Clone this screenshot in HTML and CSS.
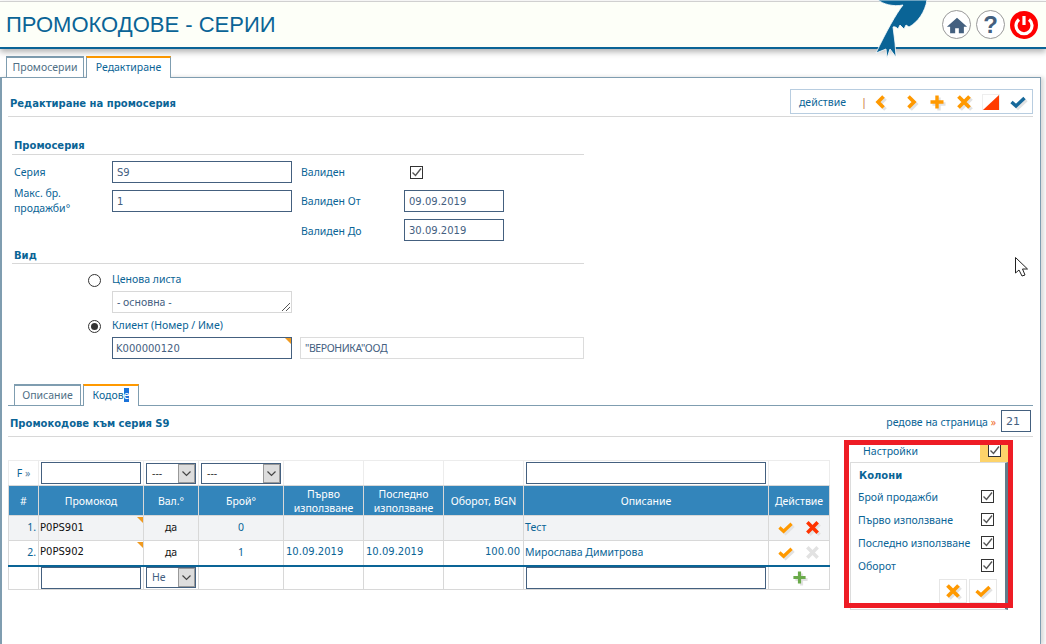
FILE: index.html
```html
<!DOCTYPE html>
<html lang="bg">
<head>
<meta charset="utf-8">
<title>Промокодове - серии</title>
<link rel="stylesheet" href="styles.css">
</head>
<body>
<svg class="defs" width="0" height="0" aria-hidden="true">
  <symbol id="i-check" viewBox="0 0 16 16"><path d="M1.5 8 L6 12 L14.5 4" fill="none" stroke="currentColor" stroke-width="3.4"/></symbol>
  <symbol id="i-cross" viewBox="0 0 16 16"><path d="M2.5 2.5 L13.5 13.5 M13.5 2.5 L2.5 13.5" fill="none" stroke="currentColor" stroke-width="3.8"/></symbol>
  <symbol id="i-plus" viewBox="0 0 16 16"><path d="M8 1.5 V14.5 M1.5 8 H14.5" fill="none" stroke="currentColor" stroke-width="3.4"/></symbol>
  <symbol id="i-left" viewBox="0 0 16 16"><path d="M10.5 2.5 L5 8 L10.5 13.5" fill="none" stroke="currentColor" stroke-width="3.6"/></symbol>
  <symbol id="i-right" viewBox="0 0 16 16"><path d="M5.5 2.5 L11 8 L5.5 13.5" fill="none" stroke="currentColor" stroke-width="3.6"/></symbol>
  <symbol id="i-tick" viewBox="0 0 11 11"><path d="M1.5 5.500 L4.500 8.500 L10 1.500" fill="none" stroke="#555" stroke-width="1.4"/></symbol>
  <symbol id="i-arrow" viewBox="0 0 15 17"><path d="M3.500 6.500 L7.500 10.500 L11.500 6.500" fill="none" stroke="#444" stroke-width="1.2"/></symbol>
</svg>

<header class="topbar">
  <h1 class="title">ПРОМОКОДОВЕ - СЕРИИ</h1>
  <svg class="bird" viewBox="0 0 70 60" width="70" height="60" aria-hidden="true">
    <path d="M18 0 C23 4 33 7 43 5 C36 14 26 32 16 53 L26 49 L27 58 L30 49 L36 57 L35 43 L33 27 C35 26 37 28 38 29 L40 25 L44 29 L46 25 L49 27 C58 22 65 12 67 0 Z" fill="#0a6496" stroke="#fff" stroke-width=".8"/>
  </svg>
  <nav class="top-icons">
    <span class="round">
      <svg viewBox="0 0 24 24" width="22" height="22" aria-hidden="true"><path d="M12 4 L23 14 H19.5 V21 H14 V15.500 H10 V21 H4.500 V14 H1 Z" fill="#44607f"/></svg>
    </span>
    <span class="round help">?</span>
    <span class="round power">
      <svg viewBox="0 0 28 28" width="28" height="28" aria-hidden="true"><path d="M9 8.500 A8 8 0 1 0 19 8.500" fill="none" stroke="#fff" stroke-width="3.2"/><path d="M14 5 V14" stroke="#fff" stroke-width="3.2"/></svg>
    </span>
  </nav>
</header>

<div class="tabs main-tabs">
  <span class="tab">Промосерии</span>
  <span class="tab active">Редактиране</span>
</div>

<main class="panel">
  <div class="panel-head">
    <h2 class="heading">Редактиране на промосерия</h2>
    <div class="toolbar">
      <span class="tool-label">действие</span>
      <span class="tool-sep">|</span>
      <svg class="ico orange t-left"><use href="#i-left"/></svg>
      <svg class="ico orange t-right"><use href="#i-right"/></svg>
      <svg class="ico orange t-plus"><use href="#i-plus"/></svg>
      <svg class="ico orange t-cross"><use href="#i-cross"/></svg>
      <svg class="ico t-tri" viewBox="0 0 18 16" aria-hidden="true"><rect x=".5" y=".5" width="17" height="15" fill="#fff" stroke="#eee"/><path d="M17 1 V16 H1 Z" fill="#ff3c00"/></svg>
      <svg class="ico blue t-check"><use href="#i-check"/></svg>
    </div>
  </div>

  <section class="form-section">
    <h3 class="section-title first">Промосерия</h3>
    <div class="form-grid">
      <label class="lbl">Серия</label>
      <input class="field" value="S9" readonly>
      <label class="lbl">Валиден</label>
      <span class="check-cell"><span class="check"><svg><use href="#i-tick"/></svg></span></span>

      <label class="lbl two-line">Макс. бр. продажби°</label>
      <input class="field" value="1" readonly>
      <label class="lbl">Валиден От</label>
      <input class="field" value="09.09.2019" readonly>

      <span></span>
      <span></span>
      <label class="lbl valid-to">Валиден До</label>
      <input class="field" value="30.09.2019" readonly>
    </div>

    <h3 class="section-title second">Вид</h3>
    <div class="kind">
      <div class="radio-row"><span class="radio"></span><span class="lbl">Ценова листа</span></div>
      <div class="resize-box">- основна -
        <svg class="grip" viewBox="0 0 8 8" width="8" height="8" aria-hidden="true"><path d="M0 8 L8 0 M4 8 L8 4" stroke="#555" stroke-width="1"/></svg>
      </div>
      <div class="radio-row second-radio"><span class="radio on"></span><span class="lbl">Клиент (Номер / Име)</span></div>
      <div class="client-row">
        <div class="marked"><input class="field client" value="K000000120" readonly></div>
        <input class="field ghost" value="&quot;ВЕРОНИКА&quot;ООД" readonly>
      </div>
    </div>
  </section>

  <div class="tabs sub-tabs">
    <span class="tab">Описание</span>
    <span class="tab active">Кодов<span class="selected">е</span></span>
  </div>

  <div class="list-head">
    <h2 class="heading list-title">Промокодове към серия S9</h2>
    <div class="per-page">
      <span class="per-text">редове на страница <b class="raquo">»</b></span>
      <input class="field perpage" value="21" readonly>
    </div>
  </div>

  <div class="list-body">
    <table class="grid">
      <colgroup>
        <col class="c-num"><col class="c-code"><col class="c-val"><col class="c-count"><col class="c-date"><col class="c-date"><col class="c-date"><col class="c-desc"><col class="c-act">
      </colgroup>
      <tr class="filter">
        <td class="f-mark">F <span>»</span></td>
        <td><input class="field cell-input" readonly></td>
        <td><span class="pick"><span class="pick-text dash">---</span><span class="pick-btn"><svg><use href="#i-arrow"/></svg></span></span></td>
        <td><span class="pick wide"><span class="pick-text dash">---</span><span class="pick-btn"><svg><use href="#i-arrow"/></svg></span></span></td>
        <td></td><td></td><td></td>
        <td><input class="field cell-input" readonly></td>
        <td></td>
      </tr>
      <tr class="head">
        <th>#</th><th>Промокод</th><th>Вал.°</th><th>Брой°</th><th>Първо<br>използване</th><th>Последно<br>използване</th><th>Оборот, BGN</th><th>Описание</th><th>Действие</th>
      </tr>
      <tr class="row odd">
        <td class="num">1.</td><td class="code">P0PS901</td><td class="yes">да</td><td class="ctr">0</td><td></td><td></td><td></td><td class="txt">Тест</td>
        <td class="acts"><svg class="ico small orange"><use href="#i-check"/></svg><svg class="ico small red"><use href="#i-cross"/></svg></td>
      </tr>
      <tr class="row last">
        <td class="num">2.</td><td class="code">P0PS902</td><td class="yes">да</td><td class="ctr">1</td><td class="date">10.09.2019</td><td class="date">10.09.2019</td><td class="sum">100.00</td><td class="txt">Мирослава Димитрова</td>
        <td class="acts"><svg class="ico small orange"><use href="#i-check"/></svg><svg class="ico small off"><use href="#i-cross"/></svg></td>
      </tr>
      <tr class="add">
        <td></td>
        <td><input class="field cell-input" readonly></td>
        <td><span class="pick"><span class="pick-text">Не</span><span class="pick-btn"><svg><use href="#i-arrow"/></svg></span></span></td>
        <td></td><td></td><td></td><td></td>
        <td><input class="field cell-input" readonly></td>
        <td class="acts"><svg class="ico small green"><use href="#i-plus"/></svg></td>
      </tr>
    </table>

    <aside class="settings">
      <div class="settings-head">
        <span class="settings-name">Настройки</span>
        <span class="settings-toggle"><span class="check"><svg><use href="#i-tick"/></svg></span></span>
      </div>
      <div class="settings-box">
        <div class="settings-title">Колони</div>
        <div class="opt"><span>Брой продажби</span><span class="check"><svg><use href="#i-tick"/></svg></span></div>
        <div class="opt"><span>Първо използване</span><span class="check"><svg><use href="#i-tick"/></svg></span></div>
        <div class="opt"><span>Последно използване</span><span class="check"><svg><use href="#i-tick"/></svg></span></div>
        <div class="opt"><span>Оборот</span><span class="check"><svg><use href="#i-tick"/></svg></span></div>
        <div class="settings-actions">
          <span class="btn"><svg class="ico orange"><use href="#i-cross"/></svg></span>
          <span class="btn"><svg class="ico orange"><use href="#i-check"/></svg></span>
        </div>
      </div>
      <div class="red-frame"></div>
    </aside>
  </div>
</main>

<svg class="cursor" viewBox="0 0 14 20" width="14" height="20" aria-hidden="true">
  <path d="M.5 .5 V16 L4 13 L7 19 L10 18 L7.500 12 H12.500 Z" fill="#fff" stroke="#222" stroke-width="1"/>
</svg>
</body>
</html>
```
FILE: styles.css
```css
* { box-sizing: border-box; }
html, body { margin: 0; height: 100%; }
body {
  background: #fff;
  color: #0a6496;
  font: 10.5px "Noto Sans", "Liberation Sans", sans-serif;
  overflow: hidden;
  position: relative;
}
.defs { position: absolute; }

.topbar {
  height: 48px;
  margin-top: 1px;
  border-top: 1px solid #d0d0d0;
  border-bottom: 2px solid #0a6496;
  background: #fdfff8;
  box-shadow: 0 3px 6px rgba(0, 0, 0, .3);
  display: flex;
  align-items: center;
  justify-content: space-between;
  padding: 0 8px 0 6px;
  position: relative;
  z-index: 2;
}
.title {
  margin: 0;
  font: 400 22px "Liberation Sans", sans-serif;
  color: #0a6496;
}
.bird { position: absolute; left: 860px; top: -2px; overflow: visible; }
.top-icons { display: flex; gap: 5px; align-items: center; }
.round {
  width: 29px;
  height: 29px;
  border-radius: 50%;
  border: 1px solid #999;
  background: #fff;
  display: flex;
  align-items: center;
  justify-content: center;
}
.help { font: 700 24px "Liberation Sans", sans-serif; color: #44607f; }
.power { background: #f00; border: 0; width: 28px; height: 28px; }

.tabs { display: flex; align-items: flex-end; gap: 2px; }
.main-tabs { height: 22px; margin-top: 6px; padding-left: 6px; position: relative; z-index: 1; }
.tab {
  height: 21px;
  line-height: 18px;
  padding: 0 7px;
  color: #4f6f85;
  background: #fff;
  border: 1px solid #7f9db0;
  border-top-width: 2px;
  border-bottom: 0;
}
.tab.active {
  border-top: 2px solid #f90;
  color: #0a6496;
  height: 22px;
  margin-bottom: -1px;
}
.main-tabs .tab { width: 78px; text-align: center; padding: 0; }
.main-tabs .tab.active { width: 85px; }

.panel {
  width: 1041px;
  height: 568px;
  margin-top: 0;
  border: 1px solid #7f9db0;
  border-left-width: 2px;
  box-shadow: 3px 0 4px rgba(0, 0, 0, .15);
  padding: 12px 7px 0 6px;
  background: #fff;
}
.panel-head {
  height: 27px;
  border-bottom: 1px solid #d8d8d8;
  display: flex;
  align-items: center;
  justify-content: space-between;
  padding-left: 2px;
}
.heading {
  margin: 0;
  font: 700 10px "DejaVu Sans", sans-serif;
  color: #0a6496;
}
.toolbar {
  height: 25px;
  width: 243px;
  margin-top: -3px;
  border: 1px solid #b8cde0;
  display: flex;
  align-items: center;
  padding-left: 8px;
}
.tool-label { width: 62px; }
.tool-sep { color: #c9703a; width: 10px; font-size: 11px; }
.ico { width: 16px; height: 16px; filter: drop-shadow(2px 2px 0 #e2e2e2); display: block; flex: none; }
.orange { color: #f90; }
.blue { color: #16689a; }
.red { color: #f30; }
.off { color: #e2e2e2; filter: none; }
.green { color: #6aaa4a; }
.t-left { margin-left: 2px; }
.t-right { margin-left: 14px; }
.t-plus { margin-left: 10px; }
.t-cross { margin-left: 11px; }
.t-tri { width: 18px; margin-left: 10px; filter: none; }
.t-check { margin-left: 10px; }

.form-section { width: 572px; margin-left: 4px; }
.section-title {
  margin: 0;
  height: 17px;
  font: 700 10px/16px "DejaVu Sans", sans-serif;
  padding-left: 2px;
  border-bottom: 1px solid #d8d8d8;
}
.section-title.first { margin-top: 21px; }
.section-title.second { margin-top: 6px; padding-top: 1px; line-height: 15px; }
.form-grid {
  display: grid;
  grid-template-columns: 100px 180px 112px 100px;
  grid-auto-rows: 22px;
  row-gap: 7px;
  margin-top: 6px;
}
.form-grid .lbl { align-self: center; padding-left: 2px; }
.form-grid .lbl:nth-child(3), .form-grid .lbl:nth-child(7), .form-grid .lbl:nth-child(11) { padding-left: 9px; }
.form-grid .valid-to { padding-top: 2px; }
.two-line { line-height: 15px; width: 92px; }
.lbl { color: #0a6496; }
.field {
  display: block;
  width: 100%;
  height: 22px;
  padding: 0 4px;
  border: 1px solid #44607f;
  border-radius: 0;
  outline: 0;
  background: #fff;
  color: #44607f;
  font: 10px "DejaVu Sans", sans-serif;
}
.check-cell { display: flex; align-items: center; padding-left: 6px; }
.check {
  width: 13px;
  height: 13px;
  border: 1px solid #333;
  background: #fff;
  display: block;
  flex: none;
}
.check svg { display: block; width: 11px; height: 11px; }

.kind { margin-left: 76px; }
.radio-row { display: flex; align-items: center; gap: 11px; height: 16px; margin-top: 8px; }
.radio-row .lbl { padding-bottom: 3px; }
.second-radio { margin-top: 5px; }
.radio {
  width: 13px;
  height: 13px;
  border-radius: 50%;
  border: 1px solid #333;
  background: #fff;
  position: relative;
  flex: none;
}
.radio.on::after {
  content: "";
  position: absolute;
  inset: 2px;
  border-radius: 50%;
  background: #333;
}
.resize-box {
  width: 180px;
  height: 22px;
  margin: 3px 0 0 24px;
  padding: 0 4px;
  line-height: 20px;
  border: 1px solid #d8d8d8;
  color: #44607f;
  position: relative;
}
.grip { position: absolute; right: 1px; bottom: 1px; }
.client-row { display: flex; gap: 8px; margin: 3px 0 0 24px; width: 472px; }
.marked { width: 180px; position: relative; flex: none; }
.marked::after {
  content: "";
  position: absolute;
  right: 1px;
  top: 1px;
  border-top: 6px solid #f09a20;
  border-left: 6px solid transparent;
}
.ghost { border-color: #dcdcdc; width: 284px; font: 10.5px "Noto Sans", sans-serif; letter-spacing: -.4px; }
.client { padding: 0 3px; }

.sub-tabs {
  height: 22px;
  margin-top: 25px;
  padding-left: 6px;
  border-bottom: 1px solid #7f9db0;
}
.sub-tabs .tab { width: 67px; text-align: center; padding: 0; }
.sub-tabs .tab.active { width: 56px; }
.selected { background: #1a73d9; color: #fff; }

.list-head {
  height: 31px;
  border-bottom: 1px solid #d8d8d8;
  display: flex;
  align-items: center;
  justify-content: space-between;
  padding: 0 2px;
}
.list-title { padding-top: 4px; }
.per-text { padding-top: 2px; }
.per-page { display: flex; align-items: center; gap: 5px; }
.raquo { color: #f07030; font-weight: 400; }
.perpage { width: 30px; font-size: 11px; }

.list-body { position: relative; padding-top: 23px; }
.grid {
  table-layout: fixed;
  border-collapse: collapse;
  width: 821px;
  font-size: 10.5px;
}
.c-num { width: 30px; }
.c-code { width: 105px; }
.c-val { width: 55px; }
.c-count { width: 85px; }
.c-date { width: 80px; }
.c-desc { width: 245px; }
.c-act { width: 61px; }
.grid td, .grid th { border: 1px solid #d8d8d8; padding: 0 2px; overflow: hidden; white-space: nowrap; }
.filter td { height: 25px; border-color: #ececec; border-bottom-color: #d8d8d8; padding: 0 2px 0 2px; }
.f-mark { text-align: center; color: #0a6496; }
.f-mark span { color: #5b86a6; }
.cell-input { height: 22px; }
.head th {
  height: 30px;
  background: #3385bb;
  color: #fff;
  font-weight: 400;
  line-height: 14px;
  padding: 0;
}
.grid .row td { height: 25px; padding-bottom: 2px; }
.odd td { background: #f2f3f5; }
.last td { border-bottom: 2px solid #0a6496; }
.add td { height: 23px; border-top: 2px solid #0a6496; }
.num { text-align: right; }
.grid .code { color: #111; font: 10px "DejaVu Sans", sans-serif; position: relative; padding-left: 1px; }
.code::after {
  content: "";
  position: absolute;
  right: 0;
  top: 1px;
  border-top: 6px solid #f09a20;
  border-left: 6px solid transparent;
}
.yes { text-align: center; color: #111; }
.ctr { text-align: center; }
.grid .txt { padding-left: 1px; }
.date { font: 10px "DejaVu Sans", sans-serif; }
.sum { text-align: right; font: 10px "DejaVu Sans", sans-serif; }
.grid .sum { padding-right: 3px; }
.acts .ico { display: inline-block; vertical-align: middle; }
.small { width: 15px; height: 15px; }
.acts .small + .small { margin-left: 12px; }
.acts { text-align: center; }

.pick {
  display: flex;
  width: 50px;
  height: 21px;
  border: 1px solid #44607f;
  background: #fff;
}
.pick.wide { width: 80px; }
.pick-text { flex: 1; padding-left: 5px; line-height: 19px; color: #44607f; }
.dash { color: #333; }
.pick-btn { width: 17px; background: #ddd; border: 1px solid #999; flex: none; }
.pick-btn svg { display: block; width: 15px; height: 17px; }

.settings {
  position: absolute;
  left: 842px;
  top: 8px;
  width: 158px;
}
.settings-head {
  height: 17px;
  display: flex;
  justify-content: space-between;
  align-items: center;
  padding-left: 13px;
}
.settings-name { padding-bottom: 5px; }
.settings-toggle {
  width: 28px;
  height: 17px;
  background: #fdd36a;
  display: flex;
  justify-content: center;
  margin-top: -1px;
}
.settings-toggle .check { margin-top: -1px; }
.settings-box {
  height: 148px;
  border: 1px solid #dcdcdc;
  border-right: 3px solid #607d8b;
  background: #fff;
  padding: 0 11px 0 7px;
}
.settings-title {
  font: 700 10px/16px "DejaVu Sans", sans-serif;
  margin-top: 5px;
  height: 17px;
  padding-left: 1px;
}
.opt { height: 23px; display: flex; justify-content: space-between; align-items: center; }
.settings-actions { display: flex; justify-content: flex-end; gap: 2px; margin: 2px -3px 0 0; }
.btn {
  width: 28px;
  height: 24px;
  border: 1px solid #e6e6e6;
  display: flex;
  align-items: center;
  justify-content: center;
}
.red-frame {
  position: absolute;
  left: -6px;
  top: -5px;
  width: 169px;
  height: 168px;
  border: 5px solid #ee1c25;
  pointer-events: none;
}
.cursor { position: absolute; left: 1015px; top: 257px; }
```
